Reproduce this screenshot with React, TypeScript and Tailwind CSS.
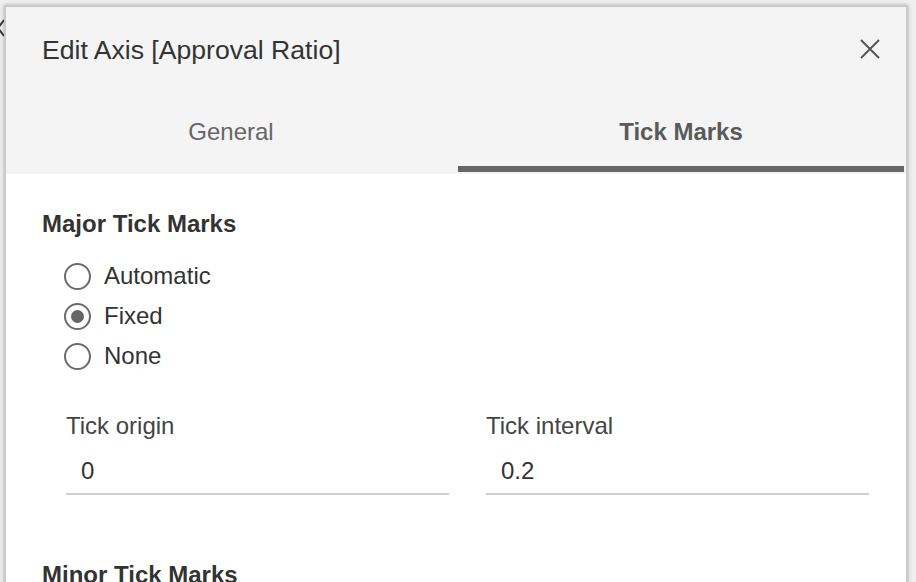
import React from 'react';

const font = { fontFamily: '"Liberation Sans", Arial, sans-serif' };

const Radio: React.FC<{ label: string; checked?: boolean }> = ({ label, checked }) => (
  <div className="flex items-center h-[40px] gap-[13px]">
    <span className="w-[27px] h-[27px] rounded-full border-2 border-[#6b6b6b] bg-white flex items-center justify-center">
      {checked && <span className="w-[13px] h-[13px] rounded-full bg-[#666]" />}
    </span>
    <span className="text-[24px] leading-[28px] text-[#333]">{label}</span>
  </div>
);

const Field: React.FC<{ label: string; value: string }> = ({ label, value }) => (
  <div className="w-[383px] flex flex-col">
    <span className="text-[24px] leading-[28px] text-[#444]">{label}</span>
    <span className="mt-[17px] pl-[15px] text-[24px] leading-[28px] text-[#333]">{value}</span>
    <div className="mt-[8px] h-[2px] bg-[#cfcfcf]" />
  </div>
);

export default function App() {
  return (
    <div className="w-[916px] h-[582px] overflow-hidden bg-[#efefef] relative pt-[5px] pl-[4px]" style={font}>
      {/* bit of the page behind the dialog */}
      <svg className="absolute left-[-4px] top-[19px]" width="10" height="18" viewBox="0 0 10 18">
        <path d="M8 1 L2 9 L8 17" stroke="#333" strokeWidth="2" fill="none" />
      </svg>

      <div className="relative w-[904px] border-2 border-[#c9c9c9] bg-white shadow-[0_0_4px_rgba(0,0,0,0.25)]">
        {/* Header */}
        <div className="bg-[#f4f4f4]">
          <div className="h-[84px] flex items-center justify-between pl-[36px] pr-[26px]">
            <h1 className="text-[26.6px] leading-[30px] text-[#333] pt-[2px]">Edit Axis [Approval Ratio]</h1>
            <svg width="20" height="20" viewBox="0 0 20 20">
              <path d="M1 1 L19 19 M19 1 L1 19" stroke="#555" strokeWidth="2" />
            </svg>
          </div>

          {/* Tabs */}
          <div className="flex gap-[2px] pb-[2px]">
            <div className="w-[450px] flex flex-col items-center">
              <span className="pt-[27px] text-[24px] leading-[28px] text-[#666]">General</span>
              <div className="mt-[20px] h-[6px] w-full" />
            </div>
            <div className="w-[446px] flex flex-col items-center">
              <span className="pt-[27px] text-[24px] leading-[28px] font-bold text-[#5a5a5a]">Tick Marks</span>
              <div className="mt-[20px] h-[6px] w-full bg-[#666]" />
            </div>
          </div>
        </div>

        {/* Content */}
        <div className="pl-[36px] pt-[36px] pb-[40px]">
          <h2 className="text-[24px] leading-[28px] font-bold text-[#333]">Major Tick Marks</h2>
          <div className="mt-[18px] ml-[22px] flex flex-col">
            <Radio label="Automatic" />
            <Radio label="Fixed" checked />
            <Radio label="None" />
          </div>

          <div className="mt-[36px] ml-[24px] flex gap-[37px]">
            <Field label="Tick origin" value="0" />
            <Field label="Tick interval" value="0.2" />
          </div>

          <h2 className="mt-[66px] text-[24px] leading-[28px] font-bold text-[#333]">Minor Tick Marks</h2>
        </div>
      </div>
    </div>
  );
}
